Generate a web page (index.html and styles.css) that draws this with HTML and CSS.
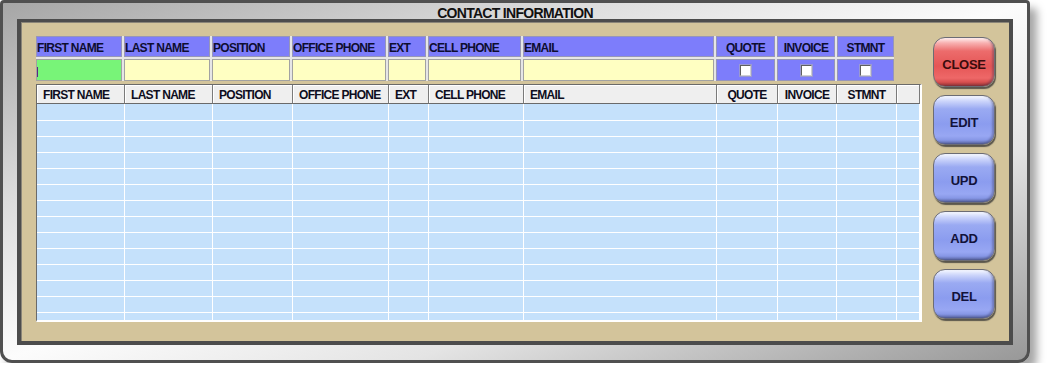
FILE: index.html
```html
<!DOCTYPE html>
<html>
<head>
<meta charset="utf-8">
<link rel="stylesheet" href="styles.css">
</head>
<body>
<div class="frame">
  <div class="title">CONTACT INFORMATION</div>
  <div class="panel">
    <div class="main">
      <div class="filter">
        <div class="fh">FIRST NAME</div>
        <div class="fh">LAST NAME</div>
        <div class="fh">POSITION</div>
        <div class="fh">OFFICE PHONE</div>
        <div class="fh">EXT</div>
        <div class="fh">CELL PHONE</div>
        <div class="fh">EMAIL</div>
        <div class="fh center">QUOTE</div>
        <div class="fh center">INVOICE</div>
        <div class="fh center">STMNT</div>
        <div class="fi green"><span class="caret"></span></div>
        <div class="fi"></div>
        <div class="fi"></div>
        <div class="fi"></div>
        <div class="fi"></div>
        <div class="fi"></div>
        <div class="fi"></div>
        <div class="fc"><span class="cb"></span></div>
        <div class="fc"><span class="cb"></span></div>
        <div class="fc"><span class="cb"></span></div>
      </div>
      <div class="grid">
        <div class="ghead">
          <div class="gh">FIRST NAME</div>
          <div class="gh">LAST NAME</div>
          <div class="gh">POSITION</div>
          <div class="gh">OFFICE PHONE</div>
          <div class="gh">EXT</div>
          <div class="gh">CELL PHONE</div>
          <div class="gh">EMAIL</div>
          <div class="gh center">QUOTE</div>
          <div class="gh center">INVOICE</div>
          <div class="gh center">STMNT</div>
          <div class="gh"></div>
        </div>
        <div class="gbody">
          <div class="gcol"></div>
          <div class="gcol"></div>
          <div class="gcol"></div>
          <div class="gcol"></div>
          <div class="gcol"></div>
          <div class="gcol"></div>
          <div class="gcol"></div>
          <div class="gcol"></div>
          <div class="gcol"></div>
          <div class="gcol"></div>
          <div class="gcol"></div>
        </div>
      </div>
    </div>
    <div class="buttons">
      <div class="btn red">CLOSE</div>
      <div class="btn">EDIT</div>
      <div class="btn">UPD</div>
      <div class="btn">ADD</div>
      <div class="btn">DEL</div>
    </div>
  </div>
</div>
</body>
</html>
```
FILE: styles.css
```css
html, body {
  margin: 0;
  padding: 0;
  background: #ffffff;
}
body {
  font-family: "Liberation Sans", Arial, sans-serif;
  color: #111122;
}
.frame {
  box-sizing: border-box;
  width: 1030px;
  height: 363px;
  border: 3px solid #505050;
  border-radius: 4px 4px 12px 12px;
  padding: 0 14px;
  background: linear-gradient(to bottom right, #a6a6a6 0%, #dcdcdc 28%, #fcfcfc 50%, #e4e4e4 70%, #989898 100%);
  box-shadow: 7px 8px 8px rgba(0, 0, 0, 0.35);
}
.title {
  height: 16px;
  line-height: 21px;
  text-align: center;
  font-weight: bold;
  font-size: 14px;
  letter-spacing: -0.7px;
  color: #111111;
}
.panel {
  box-sizing: border-box;
  height: 326px;
  border-style: solid;
  border-width: 3px 4px 4px 4px;
  border-color: #4c4c4c;
  background: #d3c49b;
  box-shadow: inset 1px 1px 0 #8a8578;
  padding: 14px 14px 0 15px;
  display: flex;
  gap: 11px;
}
.main {
  width: 886px;
  display: flex;
  flex-direction: column;
}
.filter {
  width: fit-content;
  display: grid;
  grid-template-columns: 86px 86px 78px 94px 38px 93px 191px 59px 58px 57px;
  grid-template-rows: 21px 22px;
  gap: 2px;
  background: #e6e6e6;
}
.fh {
  box-sizing: border-box;
  background: #7d7dfb;
  border: 1px solid #9696b8;
  font-size: 12px;
  letter-spacing: -0.7px;
  font-weight: bold;
  color: #0d0d30;
  padding: 2px 0 0 0;
  display: flex;
  align-items: center;
  white-space: nowrap;
}
.center {
  justify-content: center;
}
.fi {
  box-sizing: border-box;
  background: #ffffc2;
  border: 1px solid #a2a2a2;
  display: flex;
  align-items: center;
}
.fi.green {
  background: #78f478;
}
.caret {
  width: 1px;
  height: 10px;
  background: #5a2a80;
  margin-top: 4px;
}
.fc {
  box-sizing: border-box;
  background: #7d7dfb;
  border: 1px solid #9696b8;
  display: flex;
  align-items: center;
  justify-content: center;
}
.cb {
  box-sizing: border-box;
  width: 11px;
  height: 11px;
  background: #ffffff;
  border-style: solid;
  border-width: 1px;
  border-color: #606060 #d0d0d0 #d0d0d0 #606060;
  box-shadow: 0 0 0 1px #9a9ad0;
}
.grid {
  margin-top: 3px;
  width: 886px;
  box-sizing: border-box;
  border-style: solid;
  border-width: 1px 2px 2px 1px;
  border-color: #6a6a6a #ffffff #ffffff #6a6a6a;
}
.ghead, .gbody {
  display: grid;
  grid-template-columns: 88px 88px 80px 96px 40px 95px 193px 61px 59px 60px 23px;
}
.gh {
  box-sizing: border-box;
  height: 19px;
  background: #efefef;
  border-right: 1px solid #7a7a7a;
  border-bottom: 1px solid #6a6a6a;
  box-shadow: inset 1px 1px 0 #ffffff;
  font-size: 12px;
  letter-spacing: -0.7px;
  font-weight: bold;
  color: #0d0d20;
  padding: 1px 0 0 6px;
  display: flex;
  align-items: center;
  white-space: nowrap;
}
.gh.center {
  padding-left: 0;
}
.gbody {
  height: 216px;
  background: repeating-linear-gradient(to bottom, #c5e1fb 0, #c5e1fb 15px, #ffffff 15px, #ffffff 16px);
  background-position: 0 1px;
}
.gcol {
  border-right: 1px solid #ffffff;
}
.buttons {
  padding-top: 1px;
  display: flex;
  flex-direction: column;
  gap: 8px;
}
.btn {
  box-sizing: border-box;
  width: 62px;
  height: 50px;
  border-radius: 12px;
  border: 1px solid #6c6c74;
  display: flex;
  align-items: center;
  justify-content: center;
  padding-top: 4px;
  font-size: 13px;
  letter-spacing: -0.3px;
  font-weight: bold;
  color: #12123a;
  background: linear-gradient(to bottom, #f6f8ff 0px, #cdd6fb 5px, #9aaaf2 13px, #8b9cef 28px, #98a7f3 40px, #8797e6 44px, #5d6aa8 48px);
  box-shadow: 1px 2px 1px rgba(50, 50, 50, 0.75), inset -2px -1px 2px rgba(40, 40, 70, 0.3);
}
.btn.red {
  color: #3a0c0c;
  background: linear-gradient(to bottom, #fff0f0 0px, #f8b0b0 5px, #ec6c6c 13px, #e55656 28px, #ee6868 40px, #d85050 44px, #9a3434 48px);
}
```
